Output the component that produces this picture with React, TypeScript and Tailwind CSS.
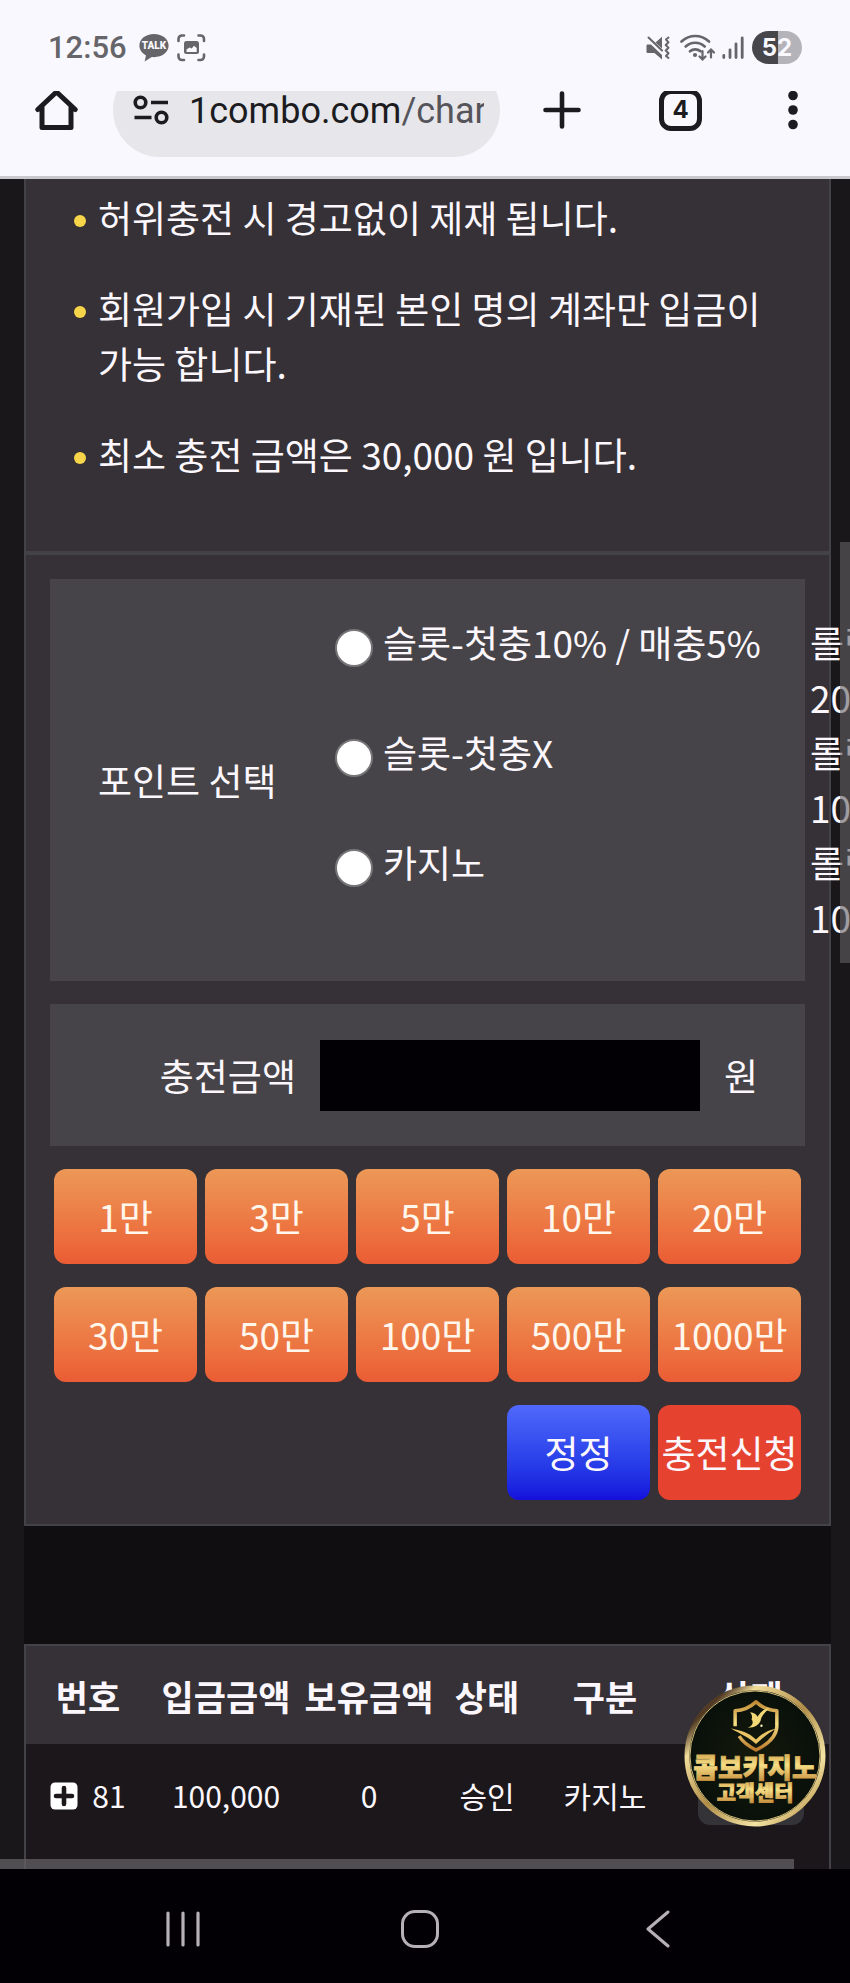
const NOTICES = [
  '허위충전 시 경고없이 제재 됩니다.',
  '회원가입 시 기재된 본인 명의 계좌만 입금이 가능 합니다.',
  '최소 충전 금액은 30,000 원 입니다.',
];

const POINTS = [
  { id: 'slot-bonus', label: '슬롯-첫충10% / 매충5%', rolling: '200%' },
  { id: 'slot-none', label: '슬롯-첫충X', rolling: '100%' },
  { id: 'casino', label: '카지노', rolling: '100%' },
];

const AMOUNTS = ['1만', '3만', '5만', '10만', '20만', '30만', '50만', '100만', '500만', '1000만'];

const StatusBar = () => (
  <div className="flex items-center justify-between h-[91px] pl-12 pr-12 pt-1 text-[#66656a]">
    <div className="flex items-center">
      <span className="font-['Roboto',sans-serif] font-medium text-[31px] leading-9">12:56</span>
      <svg className="ml-3" width="30" height="28" viewBox="0 0 30 28">
        <path
          d="M15 0C6.700 0 .4 5 .4 11.600c0 4.300 2.600 7.800 6.600 9.800L5.600 27.400l7.200-4.300c.7.1 1.400.1 2.200.1 8.300 0 14.600-5 14.600-11.600S23.300 0 15 0z"
          fill="currentColor"
        />
        <text x="15" y="15" textAnchor="middle" fontFamily="Roboto, sans-serif" fontWeight="900" fontSize="10" fill="#f9f8ff">
          TALK
        </text>
      </svg>
      <svg className="ml-2" width="29" height="28" viewBox="0 0 29 28" fill="none" stroke="currentColor" strokeWidth="2.600" strokeLinecap="round">
        <path d="M1.500 7V5a3.500 3.500 0 0 1 3.500-3.500h2M21.500 1.500h2A3.500 3.500 0 0 1 27 5v2M27 20.500v2a3.500 3.500 0 0 1-3.500 3.500h-2M7 26H5a3.500 3.500 0 0 1-3.500-3.500v-2" />
        <rect x="7" y="7" width="15" height="13" rx="2.500" fill="currentColor" stroke="none" />
        <path d="M9.500 18v-2.500l3-2 2.200 1 2.300-2.800 2.700 2.300v4z" fill="#f9f8ff" stroke="none" />
      </svg>
    </div>
    <div className="flex items-center">
      <svg width="24" height="24" viewBox="0 0 24 24" fill="none" stroke="currentColor">
        <path d="M1 8.500h4L16 19v4.500L8.500 17H1.500a1 1 0 0 1-1-1V9.500zM9.500 6.500 16 .8v11.700z" fill="currentColor" stroke="none" />
        <path d="M2.500 1.500 16 14.500" strokeWidth="2" strokeLinecap="round" />
        <path d="m22.500 1.500-2.500 2 2.500 2.800-2.800 2.700 2.800 2.800-2.800 2.700 2.800 2.800-2.500 2.700 2.500 2" strokeWidth="2" strokeLinecap="round" strokeLinejoin="round" />
      </svg>
      <svg className="ml-[10px]" width="36" height="28" viewBox="0 0 36 28" fill="none" stroke="currentColor" strokeWidth="2.600" strokeLinecap="round">
        <path d="M1.500 7.500c8-7.300 19.500-7.300 27.500 0M5.700 12.500c5.500-5 13.500-5 19 0M10 17.300c3-2.600 7.500-2.600 10.500 0" />
        <circle cx="15" cy="21" r="2.100" fill="currentColor" stroke="none" />
        <path d="M22.500 17v8M19.500 22.500l3 3 3-3M31 23.500v-8M28 18.500l3-3 3 3" strokeWidth="2.200" />
      </svg>
      <svg className="ml-[6px]" width="22" height="24" viewBox="0 0 22 24" stroke="currentColor" strokeWidth="2.800" strokeLinecap="round">
        <path d="M1.800 19.500v2M8 14v7.500M14 8v13.500M20.200 2v19.500" />
      </svg>
      <div className="ml-2 w-[50px] h-[33px] rounded-full bg-linear-to-r from-[#47464b] from-52% to-[#b4b3b9] to-52% flex items-center justify-center font-['Inter',sans-serif] font-bold text-[24px] leading-6 text-[#f9f8ff]">
        52
      </div>
    </div>
  </div>
);

// The bar is half scrolled away, so its upper edge is cut off
const Toolbar = () => (
  <div className="h-[88px] overflow-hidden border-b-3 border-[#c9c8cd] text-[#1b1b20]">
    <div className="-mt-7 h-[94px] flex items-center pl-[35px] pr-[52px]">
      <button aria-label="홈">
        <svg width="43" height="42" viewBox="0 0 43 42" fill="none" stroke="currentColor" strokeWidth="5" strokeLinejoin="round" strokeLinecap="round">
          <path d="M2.800 20.500 21.500 3l18.700 17.500M7 17v21.500h29V17" />
        </svg>
      </button>
      <button className="ml-[35px] flex items-center w-[387px] h-[94px] pl-5 pr-4 rounded-full bg-[#e6e6eb]">
        <svg width="36" height="30" viewBox="0 0 36 30" fill="none" stroke="currentColor" strokeWidth="3.600">
          <circle cx="7.500" cy="7.500" r="5.300" />
          <path d="M18 7.500h17M1.500 22.500h17" />
          <circle cx="28.500" cy="22.500" r="5.300" />
        </svg>
        <span className="ml-5 pt-[2px] flex-1 overflow-hidden whitespace-nowrap text-left font-['Roboto',sans-serif] text-[36px] leading-[46px]">
          1combo.com<span className="text-[#55545a]">/charge</span>
        </span>
      </button>
      <div className="flex-1 flex items-center justify-between pl-[43px]">
        <button aria-label="새 탭">
          <svg width="38" height="38" viewBox="0 0 38 38" stroke="currentColor" strokeWidth="4.600" strokeLinecap="round">
            <path d="M19 2.500v33M2.500 19h33" />
          </svg>
        </button>
        <button className="w-[43px] h-[42px] rounded-xl border-5 border-[#1b1b20] font-['Inter',sans-serif] font-bold text-2xl leading-8">
          4
        </button>
        <button aria-label="메뉴">
          <svg width="18" height="40" viewBox="0 0 18 40" fill="currentColor">
            <circle cx="13" cy="5.500" r="4.800" />
            <circle cx="13" cy="20" r="4.800" />
            <circle cx="13" cy="34.500" r="4.800" />
          </svg>
        </button>
      </div>
    </div>
  </div>
);

const NoticePanel = () => (
  <section className="bg-[#353136] border-x-2 border-b-2 border-[#434246] pt-[11px] pb-[69px] pl-12 pr-12">
    <ul className="flex flex-col gap-9">
      {NOTICES.map((notice) => (
        <li key={notice} className="flex gap-3">
          <span className="shrink-0 mt-[25px] size-3 rounded-full bg-[#f6d54a]" />
          <span className="break-keep">{notice}</span>
        </li>
      ))}
    </ul>
  </section>
);

const ChargeForm = () => (
  <form className="bg-[#353136] border-2 border-[#434246] p-6">
    <div className="flex items-center h-[402px] bg-[#464448] whitespace-nowrap" role="radiogroup" aria-labelledby="point-title">
      <span id="point-title" className="shrink-0 w-[285px] pl-12">
        포인트 선택
      </span>
      <div className="flex-1 min-w-0">
        {POINTS.map(({ id, label, rolling }) => (
          <div key={id} className="flex h-[110px]">
            <div className="shrink-0 w-[475px] flex items-start gap-[10px]">
              <input
                type="radio"
                name="point"
                id={id}
                className="appearance-none mt-[14px] size-[38px] rounded-full bg-white border-2 border-[#767578]"
              />
              <label htmlFor={id}>{label}</label>
            </div>
            <span>
              롤링
              <br />
              {rolling}
            </span>
          </div>
        ))}
      </div>
    </div>

    <div className="mt-[23px] flex items-center justify-end gap-6 h-[142px] pr-[47px] bg-[#464448]">
      <label htmlFor="amount">충전금액</label>
      <input id="amount" type="text" className="w-[380px] h-[71px] px-4 bg-[#020004] text-white" />
      <span>원</span>
    </div>

    <div className="mt-[23px] px-1 grid grid-cols-5 gap-x-2 gap-y-[23px] whitespace-nowrap">
      {AMOUNTS.map((amount) => (
        <button
          key={amount}
          type="button"
          className="h-[95px] rounded-xl bg-linear-to-b from-[#ec9857] to-[#eb5c34] text-[#fff6ec]"
        >
          {amount}
        </button>
      ))}
      <button type="button" className="col-start-4 h-[95px] rounded-xl bg-linear-to-b from-[#5068fb] to-[#160ddc]">
        정정
      </button>
      <button type="submit" className="h-[95px] rounded-xl bg-[#e5432f]">
        충전신청
      </button>
    </div>
  </form>
);

const HistoryTable = () => (
  <section className="border-x-2 border-t-2 border-[#434246] bg-[#1b171b] pb-[10px]">
    <table className="w-full table-fixed text-center whitespace-nowrap">
      <colgroup>
        <col className="w-[124px]" />
        <col className="w-[152px]" />
        <col className="w-[134px]" />
        <col className="w-[102px]" />
        <col className="w-[134px]" />
        <col />
      </colgroup>
      <thead>
        <tr className="h-[98px] bg-[#353136] text-[35px]">
          <th>번호</th>
          <th>입금금액</th>
          <th>보유금액</th>
          <th>상태</th>
          <th>구분</th>
          <th>삭제</th>
        </tr>
      </thead>
      <tbody>
        <tr className="h-[115px] text-[30px] *:pb-3">
          <td>
            <span className="flex items-center justify-center gap-[14px]">
              <button aria-label="펼치기">
                <svg width="28" height="28" viewBox="0 0 28 28">
                  <rect x=".5" y=".5" width="27" height="27" rx="4.500" fill="#fff" />
                  <path d="M14 6v16M6 14h16" stroke="#1b171b" strokeWidth="4.600" strokeLinecap="round" />
                </svg>
              </button>
              81
            </span>
          </td>
          <td>100,000</td>
          <td>0</td>
          <td>승인</td>
          <td>카지노</td>
          <td>
            <button aria-label="삭제" className="w-[106px] h-[56px] rounded-xl bg-[#343338] align-middle" />
          </td>
        </tr>
      </tbody>
    </table>
  </section>
);

const SupportBadge = () => (
  <a href="#support" aria-label="고객센터" className="absolute right-6 bottom-[42px]">
    <svg width="142" height="142" viewBox="0 0 143 143">
      <defs>
        <linearGradient id="ring" x1="0" y1="0" x2="1" y2="1">
          <stop offset="0" stopColor="#8d6a35" />
          <stop offset=".15" stopColor="#4f3822" />
          <stop offset=".25" stopColor="#f0dc9a" />
          <stop offset=".5" stopColor="#b08d48" />
          <stop offset=".75" stopColor="#f3e3a4" />
          <stop offset="1" stopColor="#a87b2c" />
        </linearGradient>
        <linearGradient id="gold" x1="0" y1="0" x2="0" y2="1">
          <stop offset="0" stopColor="#c08a34" />
          <stop offset=".45" stopColor="#f7df86" />
          <stop offset="1" stopColor="#bb7b2c" />
        </linearGradient>
        <radialGradient id="felt">
          <stop offset="0" stopColor="#15190c" />
          <stop offset="1" stopColor="#08100a" />
        </radialGradient>
      </defs>
      <circle cx="71.500" cy="71.500" r="68.500" fill="url(#felt)" stroke="url(#ring)" strokeWidth="5" />
      <circle cx="71.500" cy="71.500" r="65.500" fill="none" stroke="#d8bf7a" strokeWidth="1" />
      <path
        d="M51.500 41.500V26c8.500-.5 15-3.500 21-9 6 5.500 12.500 8.500 21 9v16c-.5 10-8.500 17.500-21 23.500-8-4-13.500-8.500-17-14"
        fill="none"
        stroke="url(#gold)"
        strokeWidth="3.500"
        strokeLinejoin="round"
      />
      <path d="M47 43.500c10 2.500 18.500 4 25.500 11.500 5-5 10-9 20-11-8 5-12 8-20 15.500C66 53 57 49.500 47 43.500z" fill="#eac566" />
      <path d="M86 23.500c-5 4.500-8 8-8.500 11-1 5.500-6 8.500-13.500 8.500 5-2 6.500-5 4-8.500 1-2.500.5-4.500-1.500-7 4 .5 6.500 2 7.500 4.500 3-5 6.500-8 12-8.500z" fill="#f3d976" />
      <circle cx="78" cy="41" r="1.200" fill="#f9efc0" />
      <g
        fill="url(#gold)"
        textAnchor="middle"
        fontFamily="'Noto Sans CJK KR', sans-serif"
        fontWeight="900"
        stroke="url(#gold)"
        strokeWidth=".8"
      >
        <text x="71.500" y="94" fontSize="27">
          콤보카지노
        </text>
        <text x="71.500" y="116" fontSize="21">
          고객센터
        </text>
      </g>
    </svg>
  </a>
);

const NavBar = () => (
  <nav className="grid grid-cols-3 justify-items-center items-center h-[114px] pt-[6px] pr-[10px] bg-[#020004] text-[#b5b1b7]">
    <button aria-label="최근 앱" className="ml-[86px]">
      <svg width="36" height="36" viewBox="0 0 36 36" stroke="currentColor" strokeWidth="3.200" strokeLinecap="round">
        <path d="M3 2v32M18 2v32M33 2v32" />
      </svg>
    </button>
    <button aria-label="홈 화면" className="size-[38px] rounded-[14px] border-3 border-[#b5b1b7]" />
    <button aria-label="뒤로" className="mr-[84px]">
      <svg width="24" height="38" viewBox="0 0 24 38" fill="none" stroke="currentColor" strokeWidth="3" strokeLinecap="round" strokeLinejoin="round">
        <path d="M22 2 2 19l20 17" />
      </svg>
    </button>
  </nav>
);

const App = () => {
  return (
    <div className="bg-[#020004] text-[#fbf7fc] font-['Noto_Sans_CJK_KR',sans-serif] text-[37px] leading-[55px]">
      <header className="bg-[#f9f8ff]">
        <StatusBar />
        <Toolbar />
      </header>
      <main className="relative overflow-hidden bg-[#1a171b] pl-6 pr-[19px]">
        <NoticePanel />
        <ChargeForm />
        <div className="h-[118px] bg-[#110e12]" />
        <HistoryTable />
        <SupportBadge />
        <div className="absolute right-0 top-[363px] w-[10px] h-[421px] bg-[#646166]/60" />
        <div className="absolute left-0 right-14 bottom-0 h-[10px] bg-[#646166]/75" />
      </main>
      <NavBar />
    </div>
  );
};

export default App;
